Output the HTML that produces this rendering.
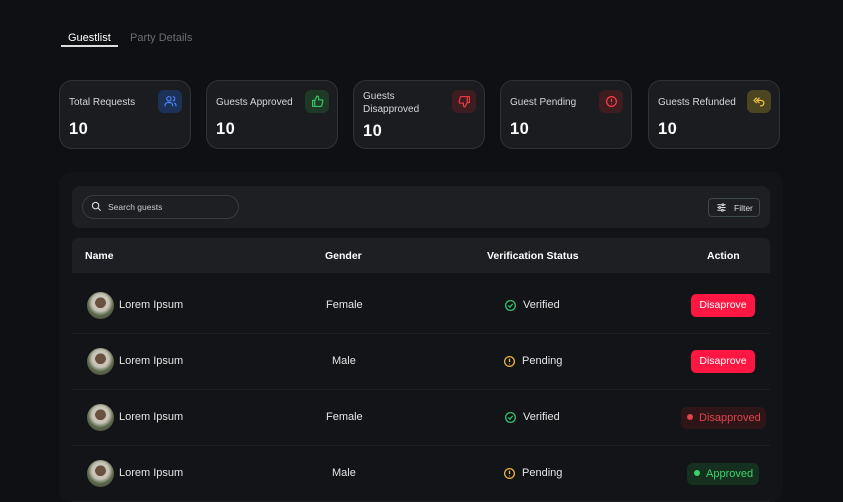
<!DOCTYPE html>
<html><head><meta charset="utf-8"><style>
*{box-sizing:border-box;margin:0;padding:0}
body{width:843px;height:500px;overflow:hidden;background:#0f1013;font-family:"Liberation Sans",sans-serif;color:#e8e8ea;position:relative}
.tab{position:absolute;top:32px;font-size:11px}
.card{position:absolute;top:80px;width:132px;height:69px;background:#1b1c20;border:1px solid #303135;border-radius:13px}
.card .t{position:absolute;left:9px;top:16px;font-size:10px;color:#d6d6d8;line-height:13px}
.card .n{position:absolute;left:9px;top:39px;font-size:16.5px;font-weight:bold;color:#fff;letter-spacing:.5px}
.card .ic{position:absolute;right:8px;top:9px;width:24px;height:23px;border-radius:6px;display:flex;align-items:center;justify-content:center}
.wrap{position:absolute;left:59px;top:172px;width:724px;height:330px;background:#131417;border-radius:12px}
.bar{position:absolute;left:72px;top:186px;width:698px;height:42px;background:#1e1f22;border-radius:8px}
.search{position:absolute;left:82px;top:195px;width:157px;height:24px;border:1px solid #3a3b3f;border-radius:12px;font-size:8.5px;color:#ccc;padding:6px 0 0 25px}
.filter{position:absolute;left:708px;top:198px;width:52px;height:19px;border:1px solid #3d4a48;border-radius:4px;font-size:8.5px;color:#ddd;padding:4px 0 0 25px}
.head{position:absolute;left:72px;top:238px;width:698px;height:35px;background:#1e1f22;border-radius:6px 6px 0 0;font-size:10.5px;font-weight:bold;color:#fff}
.head span{position:absolute;top:12px}
.row{position:absolute;left:72px;width:698px;height:56px;border-bottom:1px solid #1e1f22;font-size:11px;color:#e5e5e5}
.row span{position:absolute}
.av{position:absolute;left:15px;top:14px;width:27px;height:27px;border-radius:50%;background:radial-gradient(circle at 50% 40%,#6b5040 0 25%,#c9c4b9 26% 40%,#5a6a4a 60%,#4a3d33 100%)}
.btn{position:absolute;background:#ff1744;color:#fff;border-radius:5px;font-size:10.5px;width:64px;height:23px;line-height:23px;text-align:center;top:16px;left:619px}
.pill{position:absolute;border-radius:6px;font-size:11px;height:22px;line-height:22px;top:17px}
.dot{display:inline-block;width:6px;height:6px;border-radius:50%;margin-right:6px;vertical-align:1px}
</style></head><body>
<div class="tab" style="left:68px;color:#fff">Guestlist</div>
<div style="position:absolute;left:61px;top:45px;width:57px;height:2px;background:#ddd"></div>
<div class="tab" style="left:130px;color:#6c6d70">Party Details</div>

<div class="card" style="left:59px"><div class="t" style="top:15px">Total Requests</div><div class="n">10</div><div class="ic" style="background:#1d3157"><svg width="13" height="13" viewBox="0 0 24 24" fill="none" stroke="#4a8cff" stroke-width="2"><circle cx="9" cy="7" r="4"/><path d="M2 21v-2a5 5 0 0 1 5-5h4a5 5 0 0 1 5 5v2M16 3a4 4 0 0 1 0 8M22 21v-2a5 5 0 0 0-3-4.5"/></svg></div></div>
<div class="card" style="left:206px"><div class="t" style="top:15px">Guests Approved</div><div class="n">10</div><div class="ic" style="background:#1e3a26"><svg width="13" height="13" viewBox="0 0 24 24" fill="none" stroke="#3ad46a" stroke-width="2"><path d="M7 10v11H3V10zM7 10l4-8a3 3 0 0 1 3 3v4h6a2 2 0 0 1 2 2l-2 8a2 2 0 0 1-2 2H7"/></svg></div></div>
<div class="card" style="left:353px"><div class="t" style="top:9px">Guests<br>Disapproved</div><div class="n" style="top:41px">10</div><div class="ic" style="background:#3d1d1f"><svg width="13" height="13" viewBox="0 0 24 24" fill="none" stroke="#ff3b48" stroke-width="2"><path d="M17 14V3h4v11zM17 14l-4 8a3 3 0 0 1-3-3v-4H4a2 2 0 0 1-2-2l2-8a2 2 0 0 1 2-2h11"/></svg></div></div>
<div class="card" style="left:500px"><div class="t" style="top:15px">Guest Pending</div><div class="n">10</div><div class="ic" style="background:#3d1d1f"><svg width="13" height="13" viewBox="0 0 24 24" fill="none" stroke="#ff3b48" stroke-width="2.2"><circle cx="12" cy="12" r="9"/><path d="M12 7v6M12 16v1"/></svg></div></div>
<div class="card" style="left:648px"><div class="t" style="top:15px">Guests Refunded</div><div class="n">10</div><div class="ic" style="background:#4b4522"><svg width="13" height="13" viewBox="0 0 24 24" fill="none" stroke="#f5c542" stroke-width="2.2"><path d="M7 5L2 10l5 5M12 5l-5 5 5 5M7 10h8a5 5 0 0 1 0 10h-2"/></svg></div></div>

<div class="wrap"></div>
<div class="bar"></div>
<div class="search">Search guests</div>
<svg style="position:absolute;left:91px;top:201px" width="11" height="11" viewBox="0 0 24 24" fill="none" stroke="#ddd" stroke-width="2.4"><circle cx="10" cy="10" r="7"/><path d="M15 15l6 6"/></svg>
<div class="filter">Filter</div>
<svg style="position:absolute;left:716px;top:202px" width="11" height="11" viewBox="0 0 24 24" fill="none" stroke="#ddd" stroke-width="2.2"><path d="M3 6h18M3 12h18M3 18h18"/><circle cx="15" cy="6" r="2" fill="#1e1f22"/><circle cx="8" cy="12" r="2" fill="#1e1f22"/><circle cx="14" cy="18" r="2" fill="#1e1f22"/></svg>

<div class="head"><span style="left:13px">Name</span><span style="left:253px">Gender</span><span style="left:415px">Verification Status</span><span style="left:635px">Action</span></div>

<div class="row" style="top:278px"><div class="av"></div><span style="left:47px;top:21px">Lorem Ipsum</span><span style="left:254px;top:21px">Female</span>
<svg style="position:absolute;left:432px;top:21px" width="13" height="13" viewBox="0 0 24 24" fill="none" stroke="#35c46a" stroke-width="2.4"><circle cx="12" cy="12" r="9"/><path d="M8 12l3 3 5-6"/></svg><span style="left:451px;top:21px">Verified</span>
<div class="btn">Disaprove</div></div>

<div class="row" style="top:334px"><div class="av"></div><span style="left:47px;top:21px">Lorem Ipsum</span><span style="left:260px;top:21px">Male</span>
<svg style="position:absolute;left:431px;top:21px" width="13" height="13" viewBox="0 0 24 24" fill="none" stroke="#e8b53a" stroke-width="2.4"><circle cx="12" cy="12" r="9"/><path d="M12 7v6M12 16v1"/></svg><span style="left:450px;top:21px">Pending</span>
<div class="btn">Disaprove</div></div>

<div class="row" style="top:390px"><div class="av"></div><span style="left:47px;top:21px">Lorem Ipsum</span><span style="left:254px;top:21px">Female</span>
<svg style="position:absolute;left:432px;top:21px" width="13" height="13" viewBox="0 0 24 24" fill="none" stroke="#35c46a" stroke-width="2.4"><circle cx="12" cy="12" r="9"/><path d="M8 12l3 3 5-6"/></svg><span style="left:451px;top:21px">Verified</span>
<div class="pill" style="left:609px;width:85px;background:#2e1518;color:#e0444c;padding-left:6px"><span class="dot" style="position:static;background:#e0444c"></span>Disapproved</div></div>

<div class="row" style="top:446px"><div class="av"></div><span style="left:47px;top:21px">Lorem Ipsum</span><span style="left:260px;top:21px">Male</span>
<svg style="position:absolute;left:431px;top:21px" width="13" height="13" viewBox="0 0 24 24" fill="none" stroke="#e8b53a" stroke-width="2.4"><circle cx="12" cy="12" r="9"/><path d="M12 7v6M12 16v1"/></svg><span style="left:450px;top:21px">Pending</span>
<div class="pill" style="left:615px;width:72px;background:#163020;color:#3ad46a;padding-left:7px"><span class="dot" style="position:static;background:#3ad46a"></span>Approved</div></div>
</body></html>
